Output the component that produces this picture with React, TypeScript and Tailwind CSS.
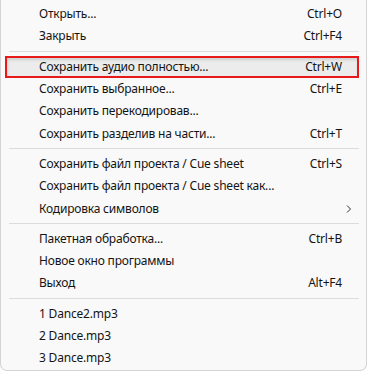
type Item =
  | { sep: true }
  | { sep?: false; label: string; shortcut?: string; submenu?: boolean; active?: boolean };

const items: Item[] = [
  { label: "Открыть...", shortcut: "Ctrl+O" },
  { label: "Закрыть", shortcut: "Ctrl+F4" },
  { sep: true },
  { label: "Сохранить аудио полностью...", shortcut: "Ctrl+W", active: true },
  { label: "Сохранить выбранное...", shortcut: "Ctrl+E" },
  { label: "Сохранить перекодировав..." },
  { label: "Сохранить разделив на части...", shortcut: "Ctrl+T" },
  { sep: true },
  { label: "Сохранить файл проекта / Cue sheet", shortcut: "Ctrl+S" },
  { label: "Сохранить файл проекта / Cue sheet как..." },
  { label: "Кодировка символов", submenu: true },
  { sep: true },
  { label: "Пакетная обработка...", shortcut: "Ctrl+B" },
  { label: "Новое окно программы" },
  { label: "Выход", shortcut: "Alt+F4" },
  { sep: true },
  { label: "1 Dance2.mp3" },
  { label: "2 Dance.mp3" },
  { label: "3 Dance.mp3" },
];

export default function App() {
  return (
    <div className="w-[368px] h-[372px] bg-white overflow-hidden">
      <div
        className="w-[367px] h-[371px] bg-[#f9f9f9] border-l border-r border-b border-[#d4d4d4] rounded-b-[7px] pt-[3px] text-[12px] tracking-[-0.2px] text-[#141414]"
        style={{ fontFamily: '"Noto Sans", "Open Sans", sans-serif' }}
      >
        {items.map((item, i) =>
          item.sep ? (
            <div key={i} className="h-[8px] flex items-center ml-[8px] mr-[7px]">
              <div className="h-px w-full bg-[#dcdcdc]" />
            </div>
          ) : (
            <div
              key={i}
              className={
                item.active
                  ? "h-[22.3px] flex items-center ml-[4px] mr-[7px] pl-[32px] pr-[15px] bg-[#ececec] border-2 border-[#e81919] shadow-[inset_1px_2px_3px_rgba(0,0,0,0.12)]"
                  : "h-[22.3px] flex items-center pl-[38px] pr-[24px]"
              }
            >
              <span className="flex-1 whitespace-nowrap">{item.label}</span>
              {item.shortcut && <span className="whitespace-nowrap">{item.shortcut}</span>}
              {item.submenu && (
                <svg width="8" height="10" viewBox="0 0 8 10" className="mr-[-11px]">
                  <path d="M2 1.5 L5.5 5 L2 8.5" fill="none" stroke="#333" strokeWidth="1" />
                </svg>
              )}
            </div>
          )
        )}
      </div>
    </div>
  );
}
